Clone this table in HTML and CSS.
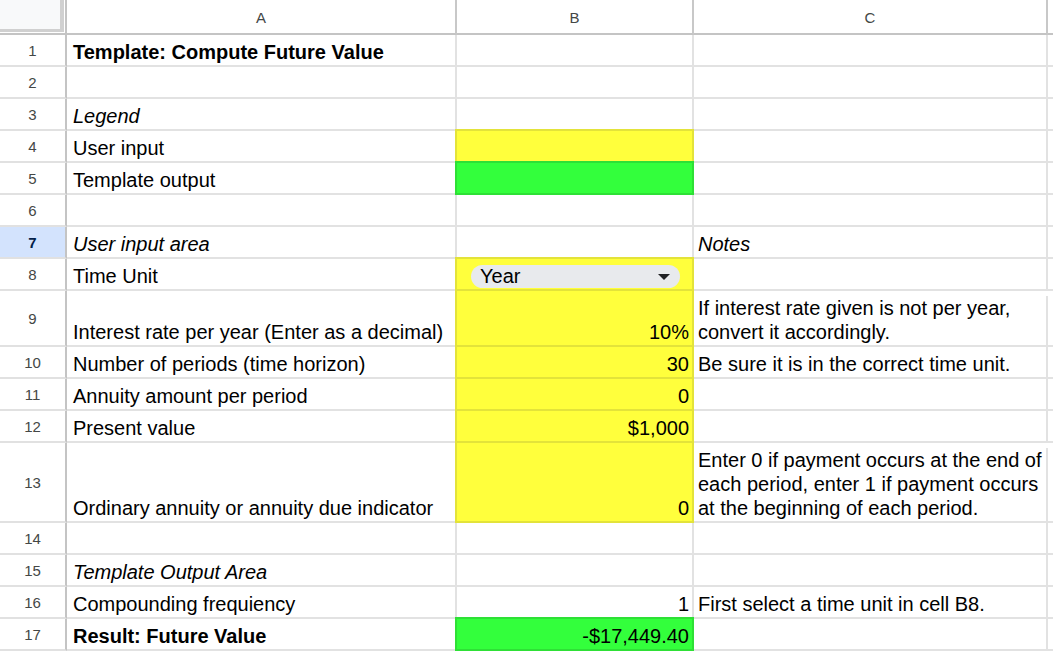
FILE: index.html
```html
<!DOCTYPE html>
<html>
<head>
<meta charset="utf-8">
<link rel="stylesheet" href="styles.css">
</head>
<body>
<div class="sheet">
  <div class="corner"><div class="corner-in"></div></div>
  <div class="colhdr">A</div>
  <div class="colhdr">B</div>
  <div class="colhdr">C</div>
  <div class="colhdr edge"></div>

  <div class="rowhdr">1</div>
  <div class="cell bold">Template: Compute Future Value</div>
  <div class="cell"></div><div class="cell"></div><div class="cell edge"></div>

  <div class="rowhdr">2</div>
  <div class="cell"></div><div class="cell"></div><div class="cell"></div><div class="cell edge"></div>

  <div class="rowhdr">3</div>
  <div class="cell ital">Legend</div>
  <div class="cell"></div><div class="cell"></div><div class="cell edge"></div>

  <div class="rowhdr">4</div>
  <div class="cell">User input</div>
  <div class="cell yel"></div><div class="cell"></div><div class="cell edge"></div>

  <div class="rowhdr">5</div>
  <div class="cell">Template output</div>
  <div class="cell grn"></div><div class="cell"></div><div class="cell edge"></div>

  <div class="rowhdr">6</div>
  <div class="cell"></div><div class="cell"></div><div class="cell"></div><div class="cell edge"></div>

  <div class="rowhdr active">7</div>
  <div class="cell ital">User input area</div>
  <div class="cell"></div>
  <div class="cell cc ital">Notes</div>
  <div class="cell edge"></div>

  <div class="rowhdr">8</div>
  <div class="cell">Time Unit</div>
  <div class="cell yel chipcell">
    <div class="chip"><span>Year</span><svg class="arrow" width="12" height="6" viewBox="0 0 12 6"><path d="M0 0H12L6 6Z" fill="#202124"/></svg></div>
  </div>
  <div class="cell"></div><div class="cell edge"></div>

  <div class="rowhdr">9</div>
  <div class="cell">Interest rate per year (Enter as a decimal)</div>
  <div class="cell yel num">10%</div>
  <div class="cell cc multi">If interest rate given is not per year,<br>convert it accordingly.</div>
  <div class="cell edge"></div>

  <div class="rowhdr">10</div>
  <div class="cell">Number of periods (time horizon)</div>
  <div class="cell yel num">30</div>
  <div class="cell cc">Be sure it is in the correct time unit.</div>
  <div class="cell edge"></div>

  <div class="rowhdr">11</div>
  <div class="cell">Annuity amount per period</div>
  <div class="cell yel num">0</div>
  <div class="cell"></div><div class="cell edge"></div>

  <div class="rowhdr">12</div>
  <div class="cell">Present value</div>
  <div class="cell yel num">$1,000</div>
  <div class="cell"></div><div class="cell edge"></div>

  <div class="rowhdr">13</div>
  <div class="cell">Ordinary annuity or annuity due indicator</div>
  <div class="cell yel num">0</div>
  <div class="cell cc multi">Enter 0 if payment occurs at the end of<br>each period, enter 1 if payment occurs<br>at the beginning of each period.</div>
  <div class="cell edge"></div>

  <div class="rowhdr">14</div>
  <div class="cell"></div><div class="cell"></div><div class="cell"></div><div class="cell edge"></div>

  <div class="rowhdr">15</div>
  <div class="cell ital">Template Output Area</div>
  <div class="cell"></div><div class="cell"></div><div class="cell edge"></div>

  <div class="rowhdr">16</div>
  <div class="cell">Compounding frequiency</div>
  <div class="cell num">1</div>
  <div class="cell cc">First select a time unit in cell B8.</div>
  <div class="cell edge"></div>

  <div class="rowhdr">17</div>
  <div class="cell bold">Result: Future Value</div>
  <div class="cell grn num">-$17,449.40</div>
  <div class="cell"></div><div class="cell edge"></div>
</div>
</body>
</html>
```

FILE: styles.css
```css
html, body {
  margin: 0;
  padding: 0;
  background: #ffffff;
  overflow: hidden;
}

.sheet {
  display: grid;
  grid-template-columns: 67px 390px 237px 354px 1fr;
  grid-template-rows: 35px repeat(8, 32px) 56px 32px 32px 32px 80px 32px 32px 32px 32px;
  width: 1053px;
  height: 653px;
  font-family: "Liberation Sans", Arial, sans-serif;
  font-size: 20px;
  color: #000;
}

.corner {
  box-sizing: border-box;
  border-right: 2px solid #c4c4c4;
  border-bottom: 2px solid #c4c4c4;
  background: #ffffff;
}

.corner-in {
  box-sizing: border-box;
  width: 64px;
  height: 32px;
  background: #f8f9fa;
  border-right: 4px solid #d0d0d0;
  border-bottom: 3px solid #d0d0d0;
}

.colhdr {
  box-sizing: border-box;
  border-right: 2px solid #c8c8c8;
  border-bottom: 2px solid #c4c4c4;
  display: flex;
  align-items: center;
  justify-content: center;
  font-size: 15px;
  color: #444746;
  padding-top: 1px;
}

.rowhdr {
  box-sizing: border-box;
  border-right: 2px solid #c4c4c4;
  border-bottom: 2px solid #e1e1e1;
  display: flex;
  align-items: center;
  justify-content: center;
  font-size: 15px;
  color: #444746;
}

.rowhdr.active {
  background: #d3e3fd;
  color: #041e49;
  font-weight: bold;
}

.cell {
  box-sizing: border-box;
  border-right: 2px solid #e2e2e2;
  border-bottom: 2px solid #e2e2e2;
  display: flex;
  align-items: flex-end;
  padding: 0 3px 1px 6px;
  line-height: 24px;
  white-space: nowrap;
  overflow: visible;
}

.cell.cc {
  padding-left: 4px;
}

.edge {
  border-right: none;
}

.bold { font-weight: bold; }
.ital { font-style: italic; }

.num {
  justify-content: flex-end;
}

.yel {
  background: #ffff3c;
  border: 2px solid #e3e33a;
  margin: -2px 0 0 -2px;
}

.grn {
  background: #33ff3c;
  border: 2px solid #2ee036;
  margin: -2px 0 0 -2px;
}

.multi {
  display: block;
  align-self: end;
  padding-top: 0;
}

.chipcell {
  padding: 0 12px 1px 14px;
}

.chip {
  flex: 1;
  height: 23px;
  border-radius: 12px;
  background: #e8eaed;
  display: flex;
  align-items: center;
  justify-content: space-between;
  padding: 0 10px 0 9px;
  box-sizing: border-box;
  line-height: 23px;
}

.arrow {
  display: block;
}
```
